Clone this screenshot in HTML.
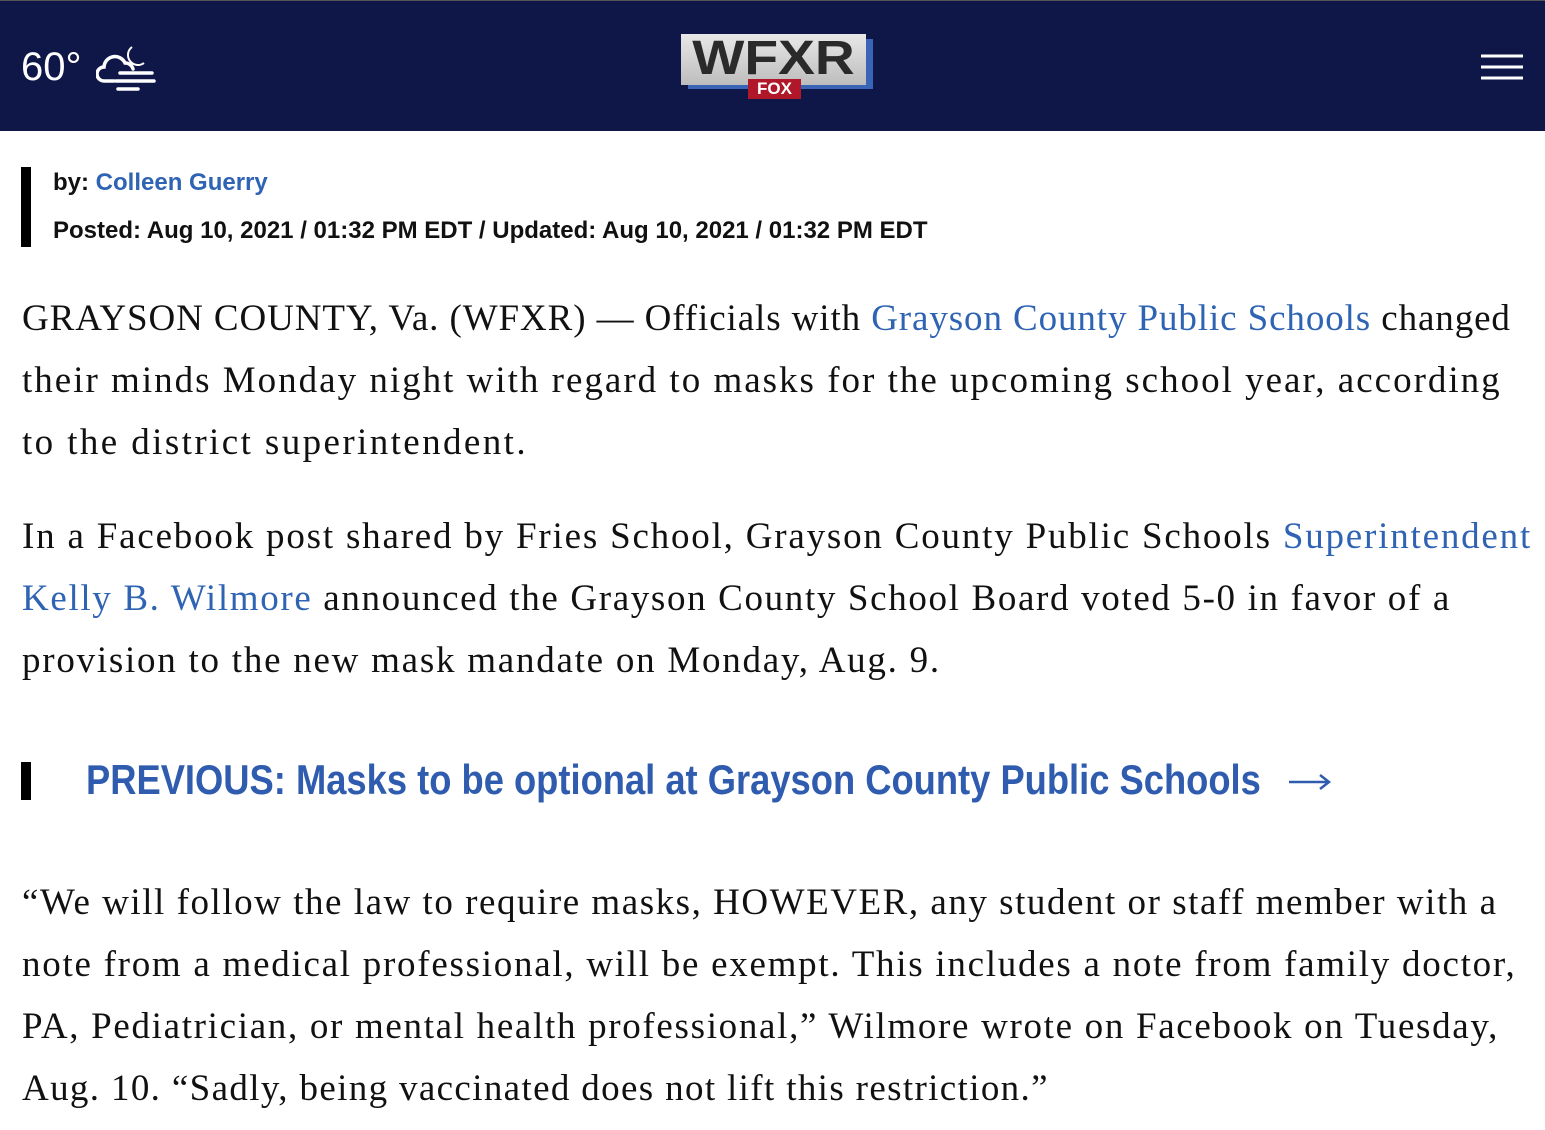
<!DOCTYPE html>
<html><head><meta charset="utf-8"><style>
*{margin:0;padding:0;box-sizing:border-box}
body{width:1545px;height:1130px;overflow:hidden;background:#fff;font-family:"Liberation Serif",serif;color:#111}
.hdr{position:absolute;left:0;top:0;width:1545px;height:131px;background:#0f1748;border-top:1px solid #555}
.temp{position:absolute;left:21px;top:44px;color:#fff;font:40px "Liberation Sans",sans-serif}
.by{position:absolute;left:21px;top:167px;width:10px;height:80px;background:#000}
.meta{position:absolute;left:53px;font:bold 24px "Liberation Sans",sans-serif;color:#111;white-space:nowrap}
a{color:#2f63b3;text-decoration:none}
.l{position:absolute;left:22px;font-size:37px;white-space:nowrap;line-height:40px}
.prev{position:absolute;left:86px;top:756px;font:bold 42px "Liberation Sans",sans-serif;color:#2f5cae;white-space:nowrap;transform-origin:0 0;transform:scaleX(.865)}
</style></head><body>
<div class="hdr">
<div class="temp">60°</div>
<svg style="position:absolute;left:96px;top:42px" width="62" height="50" viewBox="0 0 62 50" fill="none" stroke="#fff" stroke-width="3.5" stroke-linecap="round">
<path d="M36 4a10 10 0 0 0 12 16a9 9 0 0 1-12-16z" fill="#fff" stroke-width="2"/>
<path d="M18 38H8a7 7 0 0 1 0-14a11 11 0 0 1 21-4a8 8 0 0 1 8 6"/>
<path d="M24 30h32M20 38h38M22 46h20"/>
</svg>
<div style="position:absolute;left:688px;top:38px;width:185px;height:50px;background:#3a64b8"></div>
<div style="position:absolute;left:681px;top:33px;width:185px;height:51px;background:linear-gradient(#e8e8e8,#bdbdbd);"></div>
<div style="position:absolute;left:681px;top:30px;width:185px;text-align:center;font:900 48px 'Liberation Sans',sans-serif;color:#2a2a2a;transform:scaleX(1.15)">WFXR</div>
<div style="position:absolute;left:748px;top:78px;width:53px;height:20px;background:#b0182a;color:#fff;font:bold 17px 'Liberation Sans',sans-serif;text-align:center;line-height:20px">FOX</div>
<svg style="position:absolute;left:1481px;top:53px" width="42" height="28"><path d="M0 2h42M0 13h42M0 24h42" stroke="#fff" stroke-width="3"/></svg>
</div>
<div class="by"></div>
<div class="meta" style="top:169px">by: <a>Colleen Guerry</a></div>
<div class="meta" style="top:217px">Posted: Aug 10, 2021 / 01:32 PM EDT / Updated: Aug 10, 2021 / 01:32 PM EDT</div>

<div class="l" style="top:299px;letter-spacing:.9px">GRAYSON COUNTY, Va. (WFXR) — Officials with <a>Grayson County Public Schools</a> changed</div>
<div class="l" style="top:361px;letter-spacing:2px">their minds Monday night with regard to masks for the upcoming school year, according</div>
<div class="l" style="top:423px;letter-spacing:2.4px">to the district superintendent.</div>

<div class="l" style="top:517px;letter-spacing:1.8px">In a Facebook post shared by Fries School, Grayson County Public Schools <a>Superintendent</a></div>
<div class="l" style="top:579px;letter-spacing:1.65px"><a>Kelly B. Wilmore</a> announced the Grayson County School Board voted 5-0 in favor of a</div>
<div class="l" style="top:641px;letter-spacing:1.75px">provision to the new mask mandate on Monday, Aug. 9.</div>

<div style="position:absolute;left:21px;top:762px;width:10px;height:38px;background:#000"></div>
<div class="prev">PREVIOUS: Masks to be optional at Grayson County Public Schools</div>
<svg style="position:absolute;left:1288px;top:772px" width="44" height="20"><path d="M1 10h40M32 3l9 7-9 7" fill="none" stroke="#2f5cae" stroke-width="2.5"/></svg>

<div class="l" style="top:883px;letter-spacing:1.53px">“We will follow the law to require masks, HOWEVER, any student or staff member with a</div>
<div class="l" style="top:945px;letter-spacing:1.73px">note from a medical professional, will be exempt. This includes a note from family doctor,</div>
<div class="l" style="top:1007px;letter-spacing:1.68px">PA, Pediatrician, or mental health professional,” Wilmore wrote on Facebook on Tuesday,</div>
<div class="l" style="top:1069px;letter-spacing:1.35px">Aug. 10. “Sadly, being vaccinated does not lift this restriction.”</div>
</body></html>
